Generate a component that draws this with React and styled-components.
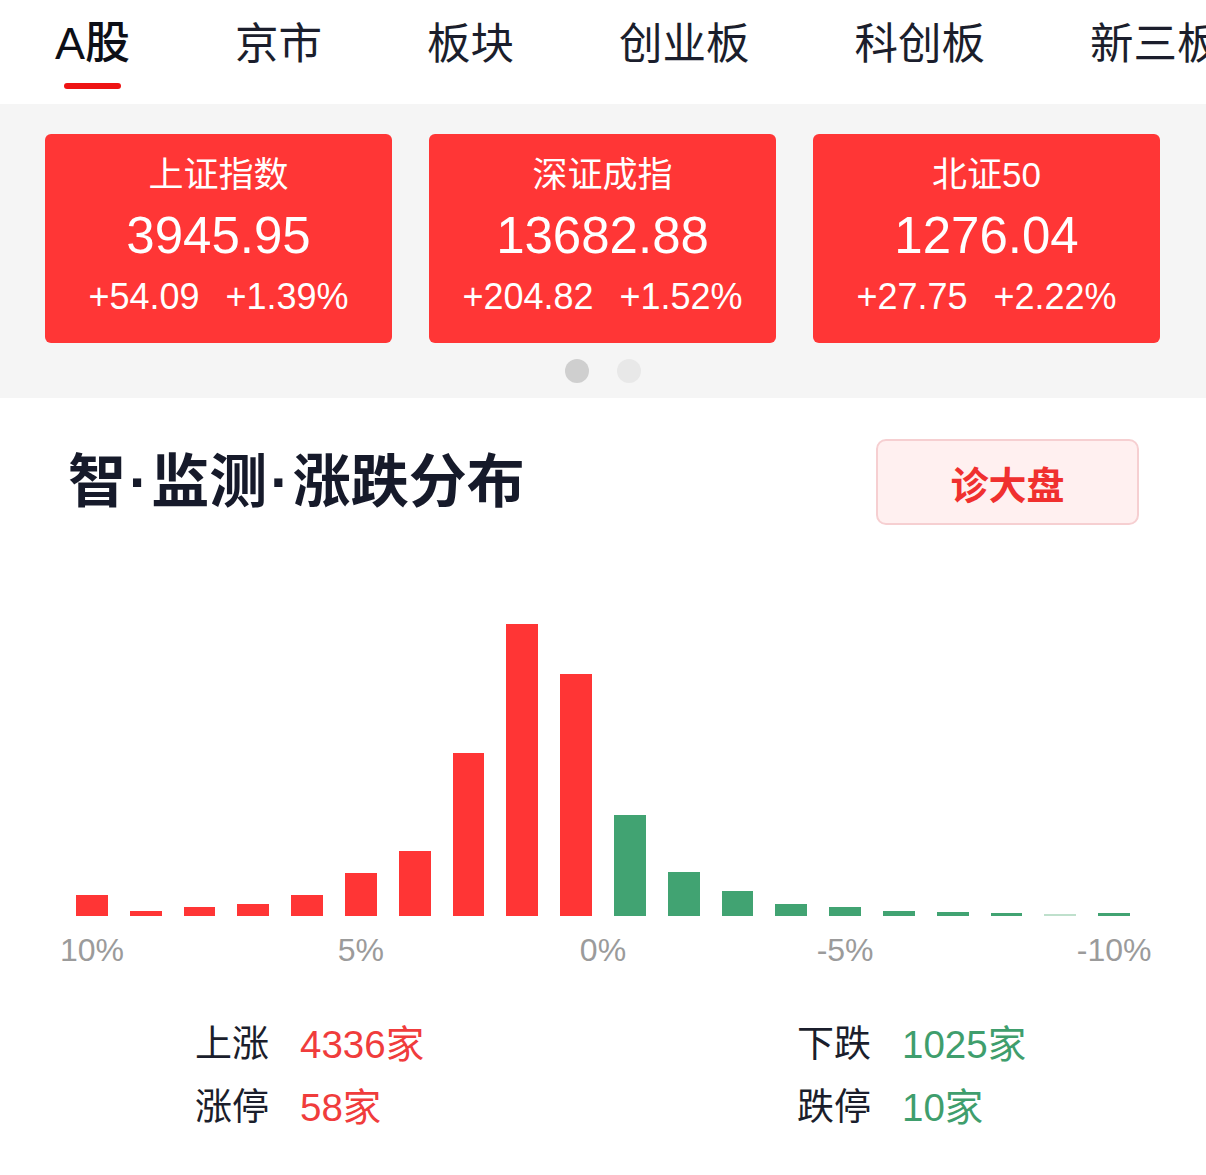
import styled, { createGlobalStyle } from 'styled-components';

const GlobalStyle = createGlobalStyle`
    * {
        box-sizing: border-box;
    }
    body {
        margin: 0;
        background: #ffffff;
        font-family: "Liberation Sans", "Noto Sans CJK SC", sans-serif;
    }
`

const Page = styled.div`
    width: 1206px;
    height: 1175px;
    overflow: hidden;
    background: #ffffff;
`

const TabBar = styled.div`
    display: flex;
    gap: 105px;
    height: 104px;
    padding: 20px 0 0 55px;
    white-space: nowrap;
    overflow: hidden;
`

const Tab = styled.div`
    display: flex;
    flex-direction: column;
    align-items: center;
    flex-shrink: 0;
`

const TabLabel = styled.span`
    font-size: ${props => props.$active ? '45px' : '43.5px'};
    line-height: 48px;
    color: ${props => props.$active ? '#0d0f17' : '#1b1e2c'};
    font-weight: ${props => props.$active ? 500 : 400};
`

const Underline = styled.div`
    width: 57px;
    height: 6px;
    margin-top: 15px;
    border-radius: 3px;
    background: ${props => props.$active ? '#ee1414' : 'transparent'};
`

const IndexSection = styled.div`
    background: #f5f5f5;
    padding: 30px 46px 15px 45px;
`

const CardRow = styled.div`
    display: grid;
    grid-template-columns: repeat(3, 347px);
    gap: 37px;
`

const Card = styled.div`
    height: 209px;
    background: #ff3636;
    border-radius: 6px;
    color: #ffffff;
    display: flex;
    flex-direction: column;
    align-items: center;
    padding-top: 19px;
`

const CardTitle = styled.div`
    font-size: 35px;
    line-height: 44px;
`

const CardValue = styled.div`
    font-size: 51px;
    line-height: 60px;
    margin-top: 9px;
`

const CardChange = styled.div`
    display: flex;
    gap: 26px;
    font-size: 36px;
    line-height: 44px;
    margin-top: 9px;
`

const Dots = styled.div`
    display: flex;
    justify-content: center;
    gap: 28px;
    margin-top: 16px;
`

const Dot = styled.div`
    width: 24px;
    height: 24px;
    border-radius: 50%;
    background: ${props => props.$active ? '#cfcfcf' : '#e8e8e8'};
`

const Header = styled.div`
    display: flex;
    align-items: center;
    justify-content: space-between;
    padding: 41px 67px 0 68px;
`

const Title = styled.h2`
    margin: -6px 0 0 0;
    font-family: "Noto Sans CJK SC", sans-serif;
    font-size: 58px;
    line-height: 70px;
    font-weight: 700;
    color: #161a2a;
`

const TitleDot = styled.span`
    font-family: "Liberation Sans", sans-serif;
    margin: 0 3px;
`

const DiagnoseButton = styled.button`
    width: 263px;
    height: 86px;
    border: 2px solid #f6cfd1;
    border-radius: 10px;
    background: #fff0f0;
    color: #f0302f;
    font-family: "Noto Sans CJK SC", sans-serif;
    font-size: 38px;
    font-weight: 700;
    padding: 0;
`

const Chart = styled.div`
    padding: 0 76px 0 76px;
    margin-top: 61px;
`

const Bars = styled.div`
    display: grid;
    grid-template-columns: repeat(20, minmax(0, 1fr));
    column-gap: 22px;
    align-items: end;
    height: 330px;
`

const Bar = styled.div`
    background: ${props => props.$color};
`

const AxisRow = styled.div`
    display: grid;
    grid-template-columns: repeat(20, minmax(0, 1fr));
    column-gap: 22px;
    margin-top: 14px;
`

const AxisLabel = styled.div`
    display: flex;
    justify-content: center;
    white-space: nowrap;
    font-size: 32px;
    line-height: 40px;
    color: #9b9b9b;
`

const Stats = styled.div`
    display: grid;
    grid-template-columns: 602px 1fr;
    row-gap: 19px;
    padding-left: 195px;
    margin-top: 53px;
`

const Stat = styled.div`
    display: flex;
    gap: 31px;
    line-height: 44px;
    white-space: nowrap;
`

const StatLabel = styled.span`
    font-size: 37px;
    color: #1b1e2c;
`

const StatValue = styled.span`
    font-size: 38.5px;
    color: ${props => props.$up ? '#f03c3c' : '#3f9e6d'};
`

const tabs = ['A股', '京市', '板块', '创业板', '科创板', '新三板']

const indices = [
    { name: '上证指数', value: '3945.95', change: '+54.09', pct: '+1.39%' },
    { name: '深证成指', value: '13682.88', change: '+204.82', pct: '+1.52%' },
    { name: '北证50', value: '1276.04', change: '+27.75', pct: '+2.22%' },
]

const RED = '#ff3535'
const GREEN = '#41a372'
const PALE = '#bfe0cc'

const bars = [
    [21, RED], [5, RED], [9, RED], [12, RED], [21, RED],
    [43, RED], [65, RED], [163, RED], [292, RED], [242, RED],
    [101, GREEN], [44, GREEN], [25, GREEN], [12, GREEN], [9, GREEN],
    [5, GREEN], [4, GREEN], [3, GREEN], [2, PALE], [3, GREEN],
]

const axis = [
    { text: '10%', col: '1' },
    { text: '5%', col: '6' },
    { text: '0%', col: '10 / span 2' },
    { text: '-5%', col: '15' },
    { text: '-10%', col: '20' },
]

const App = () => {
    return (
        <Page>
            <GlobalStyle />
            <TabBar>
                {tabs.map((t, i) => (
                    <Tab key={t}>
                        <TabLabel $active={i === 0}>{t}</TabLabel>
                        <Underline $active={i === 0} />
                    </Tab>
                ))}
            </TabBar>

            <IndexSection>
                <CardRow>
                    {indices.map(item => (
                        <Card key={item.name}>
                            <CardTitle>{item.name}</CardTitle>
                            <CardValue>{item.value}</CardValue>
                            <CardChange>
                                <span>{item.change}</span>
                                <span>{item.pct}</span>
                            </CardChange>
                        </Card>
                    ))}
                </CardRow>
                <Dots>
                    <Dot $active />
                    <Dot />
                </Dots>
            </IndexSection>

            <Header>
                <Title>智<TitleDot>·</TitleDot>监测<TitleDot>·</TitleDot>涨跌分布</Title>
                <DiagnoseButton>诊大盘</DiagnoseButton>
            </Header>

            <Chart>
                <Bars>
                    {bars.map(([h, c], i) => (
                        <Bar key={i} $color={c} style={{ height: h }} />
                    ))}
                </Bars>
                <AxisRow>
                    {axis.map(a => (
                        <AxisLabel key={a.text} style={{ gridColumn: a.col }}>{a.text}</AxisLabel>
                    ))}
                </AxisRow>
            </Chart>

            <Stats>
                <Stat><StatLabel>上涨</StatLabel><StatValue $up>4336家</StatValue></Stat>
                <Stat><StatLabel>下跌</StatLabel><StatValue>1025家</StatValue></Stat>
                <Stat><StatLabel>涨停</StatLabel><StatValue $up>58家</StatValue></Stat>
                <Stat><StatLabel>跌停</StatLabel><StatValue>10家</StatValue></Stat>
            </Stats>
        </Page>
    )
}

export default App;
